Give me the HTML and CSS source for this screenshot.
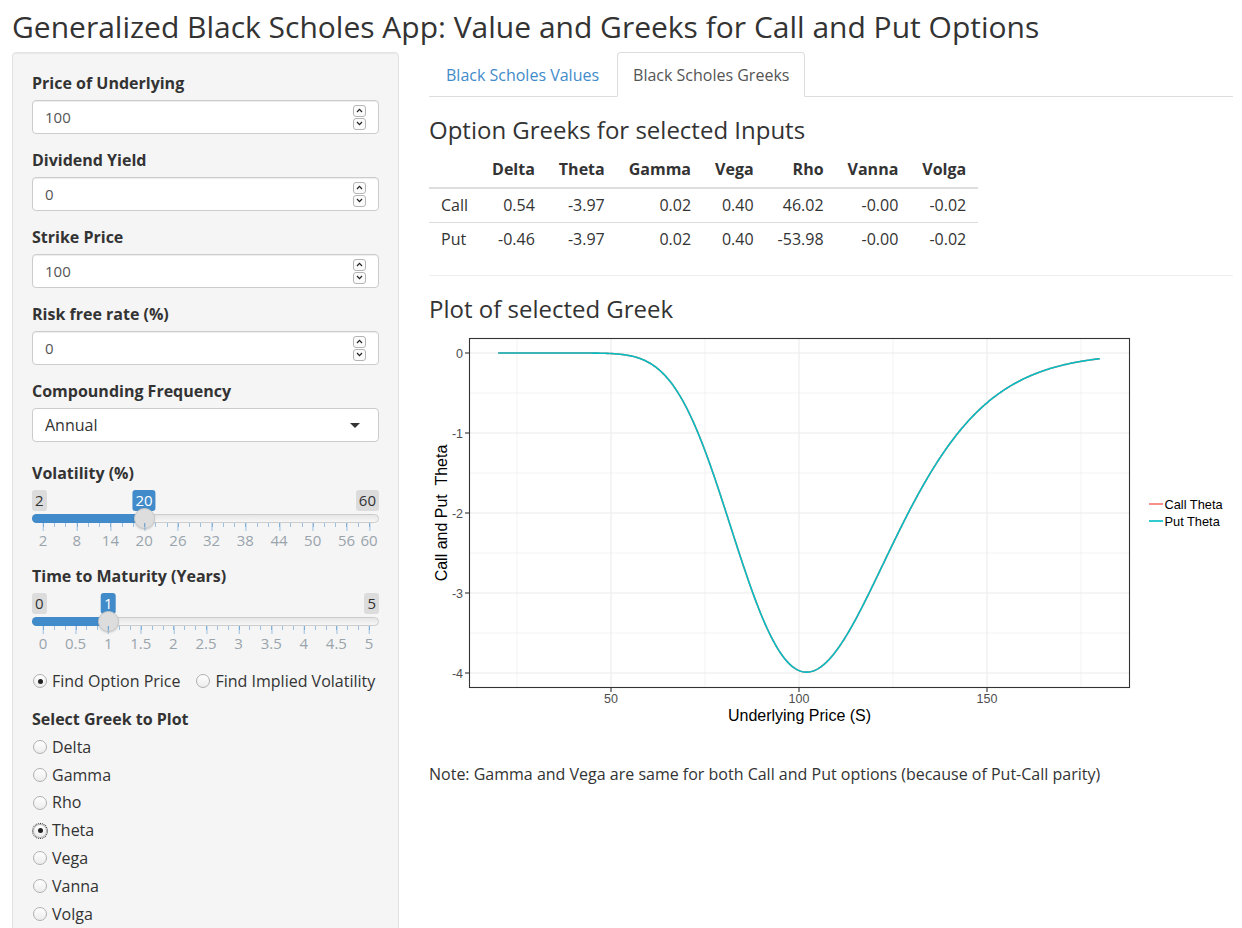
FILE: index.html
```html
<!DOCTYPE html>
<html>
<head>
<meta charset="utf-8">
<title>Generalized Black Scholes App</title>
<link rel="stylesheet" href="styles.css">
</head>
<body>
<div class="page">
  <h2 class="title">Generalized Black Scholes App: Value and Greeks for Call and Put Options</h2>
  <div class="layout">
    <aside class="well">
      <div class="form-group">
        <label class="ctl-label">Price of Underlying</label>
        <div class="num-input"><span class="num-val">100</span>
          <span class="spinner">
            <span class="spin-btn"><svg width="7" height="5" viewBox="0 0 7 5"><path d="M1 4 L3.5 1.3 L6 4" fill="none" stroke="#222" stroke-width="1.2"/></svg></span>
            <span class="spin-btn"><svg width="7" height="5" viewBox="0 0 7 5"><path d="M1 1 L3.5 3.7 L6 1" fill="none" stroke="#222" stroke-width="1.2"/></svg></span>
          </span>
        </div>
      </div>
      <div class="form-group">
        <label class="ctl-label">Dividend Yield</label>
        <div class="num-input"><span class="num-val">0</span>
          <span class="spinner">
            <span class="spin-btn"><svg width="7" height="5" viewBox="0 0 7 5"><path d="M1 4 L3.5 1.3 L6 4" fill="none" stroke="#222" stroke-width="1.2"/></svg></span>
            <span class="spin-btn"><svg width="7" height="5" viewBox="0 0 7 5"><path d="M1 1 L3.5 3.7 L6 1" fill="none" stroke="#222" stroke-width="1.2"/></svg></span>
          </span>
        </div>
      </div>
      <div class="form-group">
        <label class="ctl-label">Strike Price</label>
        <div class="num-input"><span class="num-val">100</span>
          <span class="spinner">
            <span class="spin-btn"><svg width="7" height="5" viewBox="0 0 7 5"><path d="M1 4 L3.5 1.3 L6 4" fill="none" stroke="#222" stroke-width="1.2"/></svg></span>
            <span class="spin-btn"><svg width="7" height="5" viewBox="0 0 7 5"><path d="M1 1 L3.5 3.7 L6 1" fill="none" stroke="#222" stroke-width="1.2"/></svg></span>
          </span>
        </div>
      </div>
      <div class="form-group">
        <label class="ctl-label">Risk free rate (%)</label>
        <div class="num-input"><span class="num-val">0</span>
          <span class="spinner">
            <span class="spin-btn"><svg width="7" height="5" viewBox="0 0 7 5"><path d="M1 4 L3.5 1.3 L6 4" fill="none" stroke="#222" stroke-width="1.2"/></svg></span>
            <span class="spin-btn"><svg width="7" height="5" viewBox="0 0 7 5"><path d="M1 1 L3.5 3.7 L6 1" fill="none" stroke="#222" stroke-width="1.2"/></svg></span>
          </span>
        </div>
      </div>
      <div class="form-group select-group">
        <label class="ctl-label">Compounding Frequency</label>
        <div class="select-box"><span class="select-val">Annual</span><span class="caret"></span></div>
      </div>

      <div class="form-group slider-group">
        <label class="ctl-label">Volatility (%)</label>
        <div class="irs">
          <span class="irs-min">2</span>
          <span class="irs-max">60</span>
          <div class="irs-line"></div>
          <div class="irs-bar" style="width:112px"></div>
          <span class="irs-single" style="left:112px">20</span>
          <span class="irs-handle" style="left:112px"></span>
          <div class="irs-grid vol-grid">
            <span class="irs-tick" style="left:11px">2</span>
            <span class="irs-tick" style="left:44.7px">8</span>
            <span class="irs-tick" style="left:78.4px">14</span>
            <span class="irs-tick" style="left:112.2px">20</span>
            <span class="irs-tick" style="left:145.9px">26</span>
            <span class="irs-tick" style="left:179.6px">32</span>
            <span class="irs-tick" style="left:213.3px">38</span>
            <span class="irs-tick" style="left:247px">44</span>
            <span class="irs-tick" style="left:280.7px">50</span>
            <span class="irs-tick" style="left:314.5px">56</span>
            <span class="irs-tick" style="left:337px">60</span>
          </div>
        </div>
      </div>

      <div class="form-group slider-group2">
        <label class="ctl-label">Time to Maturity (Years)</label>
        <div class="irs">
          <span class="irs-min">0</span>
          <span class="irs-max">5</span>
          <div class="irs-line"></div>
          <div class="irs-bar" style="width:76.2px"></div>
          <span class="irs-single" style="left:76.2px">1</span>
          <span class="irs-handle" style="left:76.2px"></span>
          <div class="irs-grid time-grid">
            <span class="irs-tick" style="left:11px">0</span>
            <span class="irs-tick" style="left:43.6px">0.5</span>
            <span class="irs-tick" style="left:76.2px">1</span>
            <span class="irs-tick" style="left:108.8px">1.5</span>
            <span class="irs-tick" style="left:141.4px">2</span>
            <span class="irs-tick" style="left:174px">2.5</span>
            <span class="irs-tick" style="left:206.6px">3</span>
            <span class="irs-tick" style="left:239.2px">3.5</span>
            <span class="irs-tick" style="left:271.8px">4</span>
            <span class="irs-tick" style="left:304.4px">4.5</span>
            <span class="irs-tick" style="left:337px">5</span>
          </div>
        </div>
      </div>

      <div class="form-group radio-inline-group">
        <span class="radio-opt"><span class="radio-dot checked"></span>Find Option Price</span>
        <span class="radio-opt"><span class="radio-dot"></span>Find Implied Volatility</span>
      </div>

      <div class="form-group">
        <label class="ctl-label greek-label">Select Greek to Plot</label>
        <div class="radio-list">
          <span class="radio-opt"><span class="radio-dot"></span>Delta</span>
          <span class="radio-opt"><span class="radio-dot"></span>Gamma</span>
          <span class="radio-opt"><span class="radio-dot"></span>Rho</span>
          <span class="radio-opt"><span class="radio-dot checked focused"></span>Theta</span>
          <span class="radio-opt"><span class="radio-dot"></span>Vega</span>
          <span class="radio-opt"><span class="radio-dot"></span>Vanna</span>
          <span class="radio-opt"><span class="radio-dot"></span>Volga</span>
        </div>
      </div>
    </aside>

    <main class="main">
      <ul class="nav-tabs">
        <li><a class="tab">Black Scholes Values</a></li>
        <li class="active"><a class="tab">Black Scholes Greeks</a></li>
      </ul>
      <h3 class="section-title">Option Greeks for selected Inputs</h3>
      <table class="greeks">
        <thead>
          <tr><th></th><th>Delta</th><th>Theta</th><th>Gamma</th><th>Vega</th><th>Rho</th><th>Vanna</th><th>Volga</th></tr>
        </thead>
        <tbody>
          <tr><td class="rowname">Call</td><td>0.54</td><td>-3.97</td><td>0.02</td><td>0.40</td><td>46.02</td><td>-0.00</td><td>-0.02</td></tr>
          <tr><td class="rowname">Put</td><td>-0.46</td><td>-3.97</td><td>0.02</td><td>0.40</td><td>-53.98</td><td>-0.00</td><td>-0.02</td></tr>
        </tbody>
      </table>
      <hr class="divider">
      <h3 class="section-title">Plot of selected Greek</h3>
      <svg class="plot" width="804" height="400" viewBox="0 0 804 400">
        <rect x="40" y="6" width="661" height="350" fill="#fff"/>
        <g class="grid-minor">
          <line x1="88" y1="6" x2="88" y2="356"/>
          <line x1="276" y1="6" x2="276" y2="356"/>
          <line x1="464" y1="6" x2="464" y2="356"/>
          <line x1="652" y1="6" x2="652" y2="356"/>
          <line x1="40" y1="61" x2="701" y2="61"/>
          <line x1="40" y1="141" x2="701" y2="141"/>
          <line x1="40" y1="221" x2="701" y2="221"/>
          <line x1="40" y1="301" x2="701" y2="301"/>
        </g>
        <g class="grid-major">
          <line x1="182" y1="6" x2="182" y2="356"/>
          <line x1="370" y1="6" x2="370" y2="356"/>
          <line x1="558" y1="6" x2="558" y2="356"/>
          <line x1="40" y1="21" x2="701" y2="21"/>
          <line x1="40" y1="101" x2="701" y2="101"/>
          <line x1="40" y1="181" x2="701" y2="181"/>
          <line x1="40" y1="261" x2="701" y2="261"/>
          <line x1="40" y1="341" x2="701" y2="341"/>
        </g>
        <path id="call-line" class="curve call" d=""/>
        <path id="put-line" class="curve put" d=""/>
        <rect class="panel-border" x="40.5" y="6.5" width="660" height="349"/>
        <g class="axis-ticks">
          <line x1="36" y1="21" x2="40" y2="21"/>
          <line x1="36" y1="101" x2="40" y2="101"/>
          <line x1="36" y1="181" x2="40" y2="181"/>
          <line x1="36" y1="261" x2="40" y2="261"/>
          <line x1="36" y1="341" x2="40" y2="341"/>
          <line x1="182" y1="356" x2="182" y2="360"/>
          <line x1="370" y1="356" x2="370" y2="360"/>
          <line x1="558" y1="356" x2="558" y2="360"/>
        </g>
        <g class="tick-text ytick">
          <text x="34" y="26">0</text>
          <text x="34" y="106">-1</text>
          <text x="34" y="186">-2</text>
          <text x="34" y="266">-3</text>
          <text x="34" y="346">-4</text>
        </g>
        <g class="tick-text xtick">
          <text x="182" y="371">50</text>
          <text x="370" y="371">100</text>
          <text x="558" y="371">150</text>
        </g>
        <text class="axis-title" x="370.5" y="389" text-anchor="middle">Underlying Price (S)</text>
        <text class="axis-title ytitle" transform="translate(17.5,181) rotate(-90)" text-anchor="middle">Call and Put  Theta</text>
        <g class="legend">
          <line class="key call" x1="720" y1="172" x2="734" y2="172"/>
          <line class="key put" x1="720" y1="189" x2="734" y2="189"/>
          <text x="735.5" y="176.5">Call Theta</text>
          <text x="735.5" y="193.5">Put Theta</text>
        </g>
      </svg>
      <p class="note">Note: Gamma and Vega are same for both Call and Put options (because of Put-Call parity)</p>
    </main>
  </div>
</div>
<script src="script.js"></script>
</body>
</html>
```

FILE: styles.css
```css
html, body {
  margin: 0;
  padding: 0;
  height: 100%;
  overflow: hidden;
}
body {
  font-family: "Open Sans", "DejaVu Sans", sans-serif;
  font-size: 16px;
  line-height: 1.5;
  color: #333;
  background: #fff;
}
.page {
  padding: 0 9px 0 12px;
}
.title {
  font-size: 30px;
  font-weight: 400;
  line-height: 33px;
  margin: 0 0 9px 0;
  padding-top: 10px;
  color: #333;
}
.layout {
  display: flex;
  gap: 30px;
  align-items: flex-start;
}
.well {
  width: 387px;
  flex: 0 0 387px;
  box-sizing: border-box;
  background: #f5f5f5;
  border: 1px solid #e3e3e3;
  border-radius: 4px;
  box-shadow: inset 0 1px 1px rgba(0,0,0,0.05);
  padding: 19px 19px 40px;
  min-height: 900px;
}
.form-group {
  margin-bottom: 15px;
}
.ctl-label {
  display: block;
  font-weight: 700;
  line-height: 23px;
  margin-bottom: 5px;
  padding-top: 1px;
  margin-top: -1px;
}
.num-input, .select-box {
  height: 34px;
  box-sizing: border-box;
  border: 1px solid #ccc;
  border-radius: 4px;
  background: #fff;
  display: flex;
  align-items: center;
  justify-content: space-between;
  padding: 0 12px;
  color: #555;
  font-size: 15px;
  box-shadow: inset 0 1px 1px rgba(0,0,0,0.075);
}
.spinner {
  display: flex;
  flex-direction: column;
  gap: 1px;
}
.spin-btn {
  width: 13px;
  height: 12px;
  box-sizing: border-box;
  border: 1px solid #b5b5b5;
  border-radius: 3px;
  background: #fbfbfb;
  display: flex;
  align-items: center;
  justify-content: center;
}
.spin-btn svg {
  display: block;
}
.select-box {
  color: #333;
  font-size: 16px;
  padding-right: 18px;
  box-shadow: none;
}
.caret {
  width: 0;
  height: 0;
  border-left: 5px solid transparent;
  border-right: 5px solid transparent;
  border-top: 5px solid #333;
}
.select-group {
  margin-bottom: 20px;
}

/* sliders */
.irs {
  position: relative;
  height: 60px;
}
.irs-min, .irs-max, .irs-single {
  position: absolute;
  top: 0;
  font-size: 15px;
  line-height: 21px;
  padding: 0 3px;
  border-radius: 3px;
  color: #333;
  background: rgba(0,0,0,0.1);
}
.irs-min { left: 0; }
.irs-max { right: 0; }
.irs-single {
  background: #428bca;
  color: #fff;
  transform: translateX(-50%);
}
.irs-line {
  position: absolute;
  top: 24px;
  left: 0;
  right: 0;
  height: 9px;
  box-sizing: border-box;
  border: 1px solid #ccc;
  border-radius: 16px;
  background: linear-gradient(to bottom, #ddd -50%, #fff 150%);
}
.irs-bar {
  position: absolute;
  top: 24px;
  left: 0;
  height: 9px;
  background: #428bca;
  border-radius: 16px 0 0 16px;
}
.irs-handle {
  position: absolute;
  top: 18px;
  width: 21px;
  height: 21px;
  box-sizing: border-box;
  margin-left: -10.5px;
  border-radius: 50%;
  background: #ddd;
  border: 1px solid #c8c8c8;
  box-shadow: 0 1px 2px rgba(0,0,0,0.15);
}
.irs-grid {
  position: absolute;
  top: 33px;
  left: 0;
  right: 0;
  height: 27px;
  background-repeat: no-repeat;
}
.vol-grid {
  background-image: repeating-linear-gradient(to right, rgba(66,139,202,0.5) 0 1px, transparent 1px 11.24px);
  background-position: 11px 0;
  background-size: 327px 4px;
}
.time-grid {
  background-image: repeating-linear-gradient(to right, rgba(66,139,202,0.5) 0 1px, transparent 1px 10.867px);
  background-position: 11px 0;
  background-size: 327px 4px;
}
.irs-tick {
  position: absolute;
  top: 7px;
  transform: translateX(-50%);
  font-size: 15px;
  line-height: 21px;
  color: #99a4ac;
  white-space: nowrap;
}
.irs-tick::before {
  content: "";
  position: absolute;
  top: -7px;
  left: 50%;
  width: 1px;
  height: 8px;
  background: rgba(66,139,202,0.5);
}

/* radios */
.radio-inline-group {
  display: flex;
  gap: 15px;
  padding-top: 2px;
  line-height: 23px;
}
.radio-opt {
  display: flex;
  align-items: center;
  line-height: 22.8px;
}
.radio-dot {
  position: relative;
  width: 14px;
  height: 14px;
  box-sizing: border-box;
  margin-left: 1px;
  margin-right: 5px;
  border: 1px solid #b0b0b0;
  border-radius: 50%;
  background: linear-gradient(to bottom, #fff, #ececec);
}
.radio-dot.checked::after {
  content: "";
  position: absolute;
  left: 3.5px;
  top: 3.5px;
  width: 5px;
  height: 5px;
  border-radius: 50%;
  background: #222;
}
.radio-dot.focused {
  outline: 1px dotted #222;
  outline-offset: 0;
}
.greek-label {
  margin-bottom: 5px;
}
.radio-list {
  display: flex;
  flex-direction: column;
  gap: 5px;
}

/* main */
.main {
  width: 804px;
  flex: 0 0 804px;
}
.nav-tabs {
  list-style: none;
  margin: 0;
  padding: 0 0 0 1px;
  display: flex;
  border-bottom: 1px solid #ddd;
}
.nav-tabs li {
  margin-bottom: -1px;
}
.tab {
  display: block;
  padding: 11px 15px 9px;
  line-height: 22.5px;
  margin-right: 2px;
  border: 1px solid transparent;
  border-radius: 4px 4px 0 0;
  color: #428bca;
  text-decoration: none;
}
.nav-tabs .active .tab {
  color: #555;
  background: #fff;
  border-color: #ddd #ddd transparent;
}
.section-title {
  font-size: 24px;
  font-weight: 400;
  line-height: 1.1;
  margin: 20px 0 10px;
  color: #333;
}
.greeks {
  border-collapse: collapse;
}
.greeks th {
  font-weight: 700;
  text-align: right;
  padding: 5px 12px 7px;
  line-height: 22.5px;
  border-bottom: 2px solid #ddd;
}
.greeks td {
  text-align: right;
  padding: 5px 12px;
  line-height: 22.5px;
  border-top: 1px solid #ddd;
}
.greeks td.rowname {
  text-align: left;
}
.divider {
  margin: 20px 0;
  border: 0;
  border-top: 1px solid #eee;
}
.plot {
  display: block;
  margin-top: -1px;
  font-family: "Liberation Sans", Arial, sans-serif;
}
.grid-minor line {
  stroke: #ebebeb;
  stroke-width: 0.6;
}
.grid-major line {
  stroke: #ebebeb;
  stroke-width: 1.1;
}
.curve {
  fill: none;
  stroke-width: 1.6;
}
.call { stroke: #F8766D; }
.put { stroke: #00BFC4; }
.panel-border {
  fill: none;
  stroke: #333;
  stroke-width: 1.1;
}
.axis-ticks line {
  stroke: #333;
  stroke-width: 1.1;
}
.tick-text {
  font-size: 12.5px;
  fill: #4d4d4d;
}
.ytick text {
  text-anchor: end;
}
.xtick text {
  text-anchor: middle;
}
.axis-title {
  font-size: 16px;
  fill: #000;
}
.ytitle {
  white-space: pre;
}
.legend text {
  font-size: 12.8px;
  fill: #000;
}
.legend .key {
  stroke-width: 1.6;
}
.note {
  margin: 31px 0 0;
  line-height: 22.5px;
}
```

FILE: script.js
```js
(function () {
  function pdf(x) { return Math.exp(-x * x / 2) / Math.sqrt(2 * Math.PI); }
  var d = '';
  for (var i = 0; i <= 640; i++) {
    var S = 20 + i * 0.25;
    var d1 = (Math.log(S / 100) + 0.02) / 0.2;
    var theta = -0.1 * S * pdf(d1);
    var x = 3.76 * S - 6;
    var y = 21 - 80 * theta;
    d += (i ? 'L' : 'M') + x.toFixed(2) + ' ' + y.toFixed(2);
  }
  document.getElementById('put-line').setAttribute('d', d);
  document.getElementById('call-line').setAttribute('d', d);
})();
```
